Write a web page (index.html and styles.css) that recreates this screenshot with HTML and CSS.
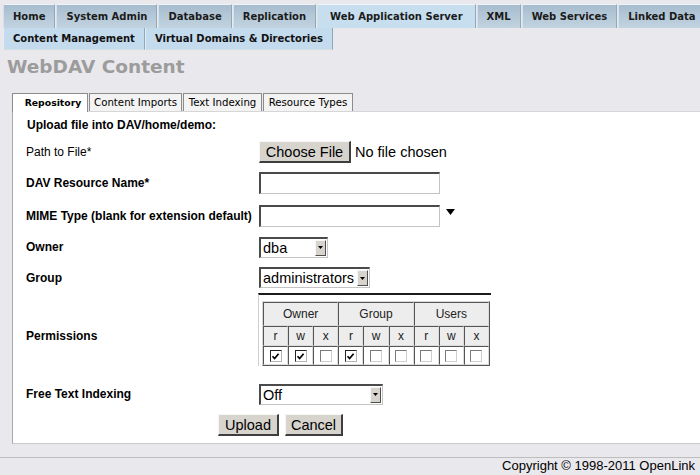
FILE: index.html
```html
<!DOCTYPE html>
<html>
<head>
<meta charset="utf-8">
<title>WebDAV Content</title>
<link rel="stylesheet" href="styles.css">
</head>
<body>
<div class="nav">
  <div class="navrow main">
    <span class="tab">Home</span>
    <span class="tab">System Admin</span>
    <span class="tab">Database</span>
    <span class="tab">Replication</span>
    <span class="tab active">Web Application Server</span>
    <span class="tab">XML</span>
    <span class="tab">Web Services</span>
    <span class="tab">Linked Data</span>
  </div>
  <div class="navrow sub">
    <span class="stab">Content Management</span>
    <span class="stab">Virtual Domains &amp; Directories</span>
  </div>
</div>

<h1 class="title">WebDAV Content</h1>

<div class="ptabs">
  <span class="ptab active w1">Repository</span>
  <span class="ptab w2">Content Imports</span>
  <span class="ptab w3">Text Indexing</span>
  <span class="ptab w4">Resource Types</span>
</div>

<div class="panel">
  <div class="row r-head"><span class="heading">Upload file into DAV/home/demo:</span></div>
  <div class="row r-path">
    <span class="lbl normal">Path to File*</span>
    <span class="btn choose">Choose File</span><span class="nofile">No file chosen</span>
  </div>
  <div class="row r-dav">
    <span class="lbl">DAV Resource Name*</span>
    <span class="input"></span>
  </div>
  <div class="row r-mime">
    <span class="lbl">MIME Type (blank for extension default)</span>
    <span class="input"></span>
    <svg class="drop" width="9" height="6" viewBox="0 0 9 6"><path d="M0 0H9L4.5 6Z" fill="#000"/></svg>
  </div>
  <div class="row r-owner">
    <span class="lbl">Owner</span>
    <span class="select s-owner"><span class="val">dba</span><span class="arrow"><svg width="5" height="3" viewBox="0 0 5 3"><path d="M0 0H5L2.5 3Z" fill="#000"/></svg></span></span>
  </div>
  <div class="row r-group">
    <span class="lbl">Group</span>
    <span class="select s-group"><span class="val">administrators</span><span class="arrow"><svg width="5" height="3" viewBox="0 0 5 3"><path d="M0 0H5L2.5 3Z" fill="#000"/></svg></span></span>
  </div>
  <div class="row r-perm">
    <span class="lbl perm-lbl">Permissions</span>
    <div class="perm">
      <table class="ptable">
        <colgroup><col><col><col><col><col><col><col><col><col></colgroup>
        <tr class="h1"><td colspan="3">Owner</td><td colspan="3">Group</td><td colspan="3">Users</td></tr>
        <tr class="h2"><td>r</td><td>w</td><td>x</td><td>r</td><td>w</td><td>x</td><td>r</td><td>w</td><td>x</td></tr>
        <tr class="cbrow">
          <td><span class="cb on"><svg width="9" height="9" viewBox="0 0 9 9"><path d="M1.5 4.2L3.6 6.5L7.6 1.8" fill="none" stroke="#000" stroke-width="1.7"/></svg></span></td>
          <td><span class="cb on"><svg width="9" height="9" viewBox="0 0 9 9"><path d="M1.5 4.2L3.6 6.5L7.6 1.8" fill="none" stroke="#000" stroke-width="1.7"/></svg></span></td>
          <td><span class="cb"></span></td>
          <td><span class="cb on"><svg width="9" height="9" viewBox="0 0 9 9"><path d="M1.5 4.2L3.6 6.5L7.6 1.8" fill="none" stroke="#000" stroke-width="1.7"/></svg></span></td>
          <td><span class="cb"></span></td>
          <td><span class="cb"></span></td>
          <td><span class="cb"></span></td>
          <td><span class="cb"></span></td>
          <td><span class="cb"></span></td>
        </tr>
      </table>
    </div>
  </div>
  <div class="row r-fti">
    <span class="lbl">Free Text Indexing</span>
    <span class="select s-off"><span class="val">Off</span><span class="arrow"><svg width="5" height="3" viewBox="0 0 5 3"><path d="M0 0H5L2.5 3Z" fill="#000"/></svg></span></span>
  </div>
  <div class="row r-btns">
    <span class="btn upload">Upload</span>
    <span class="btn cancel">Cancel</span>
  </div>
</div>

<div class="footer">Copyright © 1998-2011 OpenLink</div>
</body>
</html>
```

FILE: styles.css
```css
html, body {
  margin: 0;
  padding: 0;
}
body {
  background: #e9e8ed;
  font-family: "Liberation Sans", Arial, sans-serif;
  color: #000;
  overflow: hidden;
  width: 700px;
}

/* top navigation */
.nav {
  padding: 4px 0 0 3px;
}
.navrow {
  display: flex;
  white-space: nowrap;
}
.main .tab {
  flex: none;
  height: 23px;
  line-height: 23px;
  padding: 0 9px;
  border-top: 1px solid #f1f4f7;
  border-left: 1px solid #d5e1ea;
  border-right: 1px solid #91a8ba;
  margin-right: 1px;
  background: linear-gradient(#a6bdcf, #c2d3e0);
  font: bold 10px/23px "DejaVu Sans", Verdana, sans-serif;
  color: #1b1b1b;
}
.main .tab.active {
  background: #c7deef;
  padding: 0 12px;
}
.sub .stab {
  flex: none;
  height: 21px;
  line-height: 21px;
  padding: 0 9px;
  border-left: 1px solid #e2edf5;
  border-right: 1px solid #8ea8bb;
  border-bottom: 1px solid #d3dde6;
  background: #c4dbee;
  font: bold 10px/21px "DejaVu Sans", Verdana, sans-serif;
  color: #111;
}

/* page title */
.title {
  margin: 6px 0 15px 7px;
  font: bold 18.5px/22px "DejaVu Sans", Verdana, sans-serif;
  color: #9c9c9c;
}

/* panel tabs */
.ptabs {
  display: flex;
  margin-left: 12px;
  margin-bottom: -1px;
  height: 19px;
  align-items: flex-start;
}
.ptab {
  box-sizing: border-box;
  height: 18px;
  margin-right: 1px;
  border: 1px solid #8c8c8c;
  border-bottom: none;
  background: #f3f3f3;
  font: 10.2px/17px "DejaVu Sans", Verdana, sans-serif;
  color: #000;
  text-align: center;
  white-space: nowrap;
}
.ptab.active {
  height: 19px;
  background: #fff;
  font: bold 9.3px/17px "DejaVu Sans", Verdana, sans-serif;
  position: relative;
  z-index: 1;
  padding-left: 6px;
}
.w1 { width: 76px; }
.w2 { width: 93px; }
.w3 { width: 79px; }
.w4 { width: 90px; }

/* panel */
.panel {
  margin-left: 12px;
  background: #fff;
  border-left: 1px solid #a9a9a9;
  border-top: 1px solid #d6d6d6;
  border-bottom: 1px solid #c9c9c9;
  padding: 1px 0 2px 13px;
}
.row {
  display: flex;
  align-items: center;
}
.r-head { height: 24px; }
.r-path { height: 30px; }
.r-dav { height: 32px; }
.r-mime { height: 33px; }
.r-owner { height: 30px; }
.r-group { height: 31px; }
.r-perm { height: 86px; align-items: flex-start; }
.r-fti { height: 30px; }
.r-btns { height: 32px; padding-left: 192px; }

.heading {
  font: bold 12px/14px "Liberation Sans", Arial, sans-serif;
  padding-left: 1px;
}
.lbl {
  flex: none;
  width: 233px;
  font: bold 12px/14px "Liberation Sans", Arial, sans-serif;
  white-space: nowrap;
}
.lbl.normal { font-weight: normal; }
.perm-lbl { align-self: center; }

/* controls */
.btn {
  box-sizing: border-box;
  display: inline-flex;
  align-items: center;
  justify-content: center;
  height: 22px;
  padding: 0 5px;
  background: #d7d4ce;
  border-style: solid;
  border-width: 1px 2px 2px 1px;
  border-color: #f6f6f6 #3e3e3e #3e3e3e #f6f6f6;
  font: 14.5px/18px "Liberation Sans", Arial, sans-serif;
  color: #000;
}
.choose { width: 92px; }
.nofile {
  margin-left: 4px;
  font: 14.5px/18px "Liberation Sans", Arial, sans-serif;
}
.upload { width: 61px; }
.cancel { width: 58px; margin-left: 6px; }

.input {
  box-sizing: border-box;
  display: block;
  width: 181px;
  height: 22px;
  background: #fff;
  border-style: solid;
  border-width: 2px 1px 1px 2px;
  border-color: #4a4a4a #c4c4c4 #c4c4c4 #4a4a4a;
}
.drop {
  margin-left: 6px;
  margin-top: -7px;
}

.select {
  box-sizing: border-box;
  display: flex;
  height: 21px;
  background: #fff;
  border-style: solid;
  border-width: 2px 1px 1px 2px;
  border-color: #4a4a4a #c4c4c4 #c4c4c4 #4a4a4a;
  padding: 1px;
}
.select .val {
  flex: 1;
  padding-left: 1px;
  font: 14.5px/16px "Liberation Sans", Arial, sans-serif;
  white-space: nowrap;
}
.select .arrow {
  box-sizing: border-box;
  flex: none;
  width: 11px;
  display: flex;
  align-items: center;
  justify-content: center;
  background: #d7d4ce;
  border-style: solid;
  border-width: 1px;
  border-color: #f6f6f6 #505050 #505050 #f6f6f6;
}
.s-owner { width: 69px; }
.s-group { width: 111px; }
.s-off { width: 124px; }

/* permissions */
.perm {
  box-sizing: border-box;
  width: 233px;
  margin-left: -1px;
  border-top: 2px solid #1c1c1c;
  border-left: 1px solid #cfcfcf;
  padding: 6px 0 0 3px;
}
.ptable {
  width: 228px;
  table-layout: fixed;
  border-collapse: separate;
  border-spacing: 0;
  border: 1px solid;
  border-color: #d8d8d8 #555 #555 #d8d8d8;
}
.ptable td {
  border: 1px solid;
  border-color: #555 #dcdcdc #dcdcdc #555;
  text-align: center;
  padding: 0;
  font: 12px/14px "Liberation Sans", Arial, sans-serif;
  color: #222;
}
.h1 td {
  height: 22px;
  background: #ededed;
}
.h2 td {
  height: 18px;
  background: #ededed;
}
.cbrow td {
  height: 17px;
  background: #fff;
}
.cb {
  box-sizing: border-box;
  display: inline-flex;
  align-items: center;
  justify-content: center;
  width: 12px;
  height: 12px;
  vertical-align: middle;
  background: #fff;
  border: 1px solid;
  border-color: #7a7a7a #cfcfcf #cfcfcf #7a7a7a;
}
.cb.on {
  border-color: #222 #b5b5b5 #b5b5b5 #222;
}

/* footer */
.footer {
  margin-top: 13px;
  border-top: 1px solid #bdbdbd;
  text-align: right;
  padding-right: 5px;
  font: 13px/16px "Liberation Sans", Arial, sans-serif;
  color: #000;
}
```
